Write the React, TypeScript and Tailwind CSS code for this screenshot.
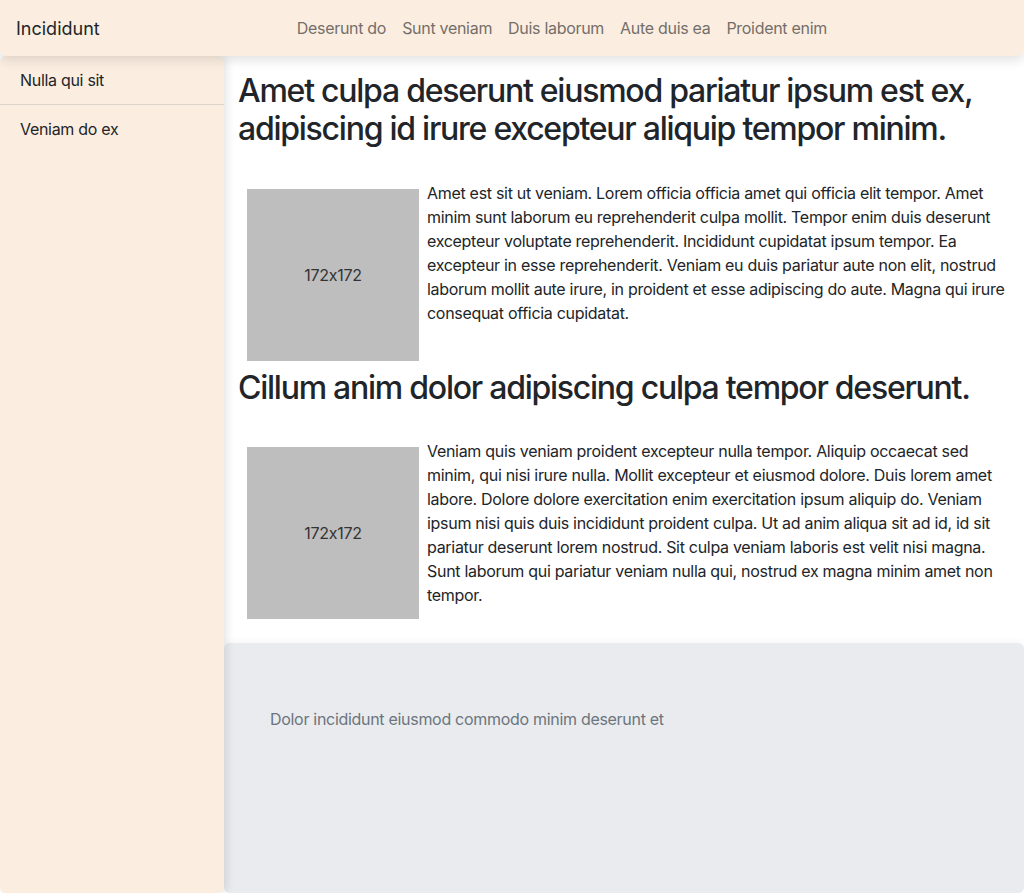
const navLinks = ["Deserunt do", "Sunt veniam", "Duis laborum", "Aute duis ea", "Proident enim"];

const sideItems = ["Nulla qui sit", "Veniam do ex"];

const sections = [
  {
    title: "Amet culpa deserunt eiusmod pariatur ipsum est ex, adipiscing id irure excepteur aliquip tempor minim.",
    body: "Amet est sit ut veniam. Lorem officia officia amet qui officia elit tempor. Amet minim sunt laborum eu reprehenderit culpa mollit. Tempor enim duis deserunt excepteur voluptate reprehenderit. Incididunt cupidatat ipsum tempor. Ea excepteur in esse reprehenderit. Veniam eu duis pariatur aute non elit, nostrud laborum mollit aute irure, in proident et esse adipiscing do aute. Magna qui irure consequat officia cupidatat.",
  },
  {
    title: "Cillum anim dolor adipiscing culpa tempor deserunt.",
    body: "Veniam quis veniam proident excepteur nulla tempor. Aliquip occaecat sed minim, qui nisi irure nulla. Mollit excepteur et eiusmod dolore. Duis lorem amet labore. Dolore dolore exercitation enim exercitation ipsum aliquip do. Veniam ipsum nisi quis duis incididunt proident culpa. Ut ad anim aliqua sit ad id, id sit pariatur deserunt lorem nostrud. Sit culpa veniam laboris est velit nisi magna. Sunt laborum qui pariatur veniam nulla qui, nostrud ex magna minim amet non tempor.",
  },
];

const App = () => {
  return (
    <div className="h-[893px] flex flex-col overflow-hidden bg-white text-[#212529] tracking-[-0.3px] [font-feature-settings:'calt'_0] font-['Inter','Liberation_Sans',sans-serif]">
      <header className="relative z-20 h-14 shrink-0 flex items-center px-4 bg-[#fbeee1] rounded-b-md shadow-[0_4px_12px_rgba(0,0,0,0.12)]">
        <span className="mr-4 text-[18px] tracking-normal text-[#212529]">Incididunt</span>
        <nav className="mx-auto flex">
          {navLinks.map((link) => (
            <a key={link} className="px-2 text-base text-[#746e69]">
              {link}
            </a>
          ))}
        </nav>
      </header>

      <div className="flex flex-1 min-h-0">
        <aside className="relative z-10 w-56 shrink-0 bg-[#fbeee1] rounded-md shadow-[2px_0_10px_rgba(0,0,0,0.12)]">
          {sideItems.map((item, index) => (
            <div
              key={item}
              className={
                index < sideItems.length - 1
                  ? "px-5 py-3 text-base leading-6 border-b border-[#ddd4cb]"
                  : "px-5 py-3 text-base leading-6"
              }
            >
              {item}
            </div>
          ))}
        </aside>

        <div className="flex-1 flex flex-col min-w-0">
          <main className="bg-white pl-[14px] pr-3 pt-4 pb-4">
            {sections.map((section) => (
              <section key={section.title} className="clear-both">
                <h2 className="text-[32px] leading-[1.2] font-medium text-[#212529] mb-8 tracking-[-1.25px]">
                  {section.title}
                </h2>
                <p className="text-base leading-6 text-[#212529]">
                  <span className="float-left w-[172px] h-[172px] mt-2 mb-2 mr-2 ml-[9px] bg-[#bebebe] flex items-center justify-center text-[#333]">
                    172x172
                  </span>
                  {section.body}
                </p>
              </section>
            ))}
            <div className="clear-both" />
          </main>
          <footer className="flex-1 bg-[#e9ebef] rounded-md pt-16 pl-[46px] shadow-[0_-2px_6px_rgba(0,0,0,0.04)]">
            <p className="text-base leading-6 text-[#6c757d]">Dolor incididunt eiusmod commodo minim deserunt et</p>
          </footer>
        </div>
      </div>
    </div>
  );
};

export default App;
